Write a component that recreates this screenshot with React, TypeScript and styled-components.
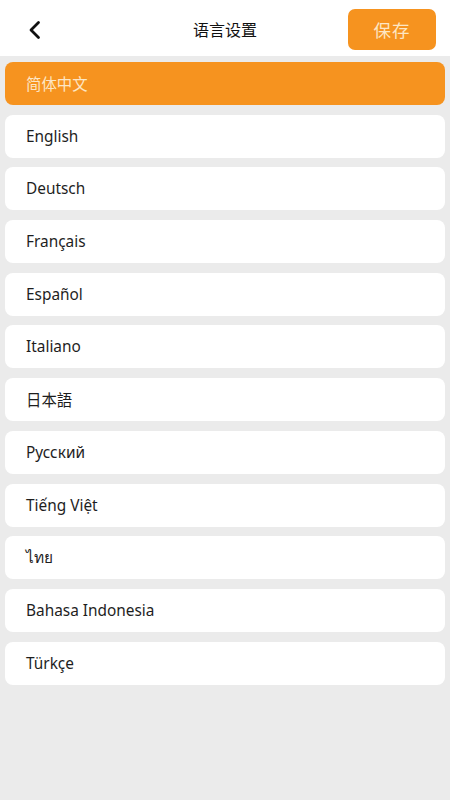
import { FC } from 'react';
import styled, { createGlobalStyle } from 'styled-components';

const LANGUAGES = [
  '简体中文',
  'English',
  'Deutsch',
  'Français',
  'Español',
  'Italiano',
  '日本語',
  'Русский',
  'Tiếng Việt',
  'ไทย',
  'Bahasa Indonesia',
  'Türkçe',
];

const GlobalStyle = createGlobalStyle`
  html, body {
    margin: 0;
    padding: 0;
    background: #ebebeb;
    font-family: "Noto Sans", "Noto Sans CJK SC", sans-serif;
  }
`;

const App: FC = () => {
  const selected = 0;

  return (
    <Root>
      <GlobalStyle />
      <Header>
        <BackButton aria-label="back">
          <svg width="16" height="20" viewBox="0 0 16 20" fill="none">
            <path d="M12.5 2.5 L5 10 L12.5 17.5" stroke="#111" strokeWidth="2.8" strokeLinecap="round" strokeLinejoin="round" />
          </svg>
        </BackButton>
        <Title>语言设置</Title>
        <SaveButton>保存</SaveButton>
      </Header>
      <List>
        {LANGUAGES.map((lang, i) => (
          <Row key={lang} $active={i === selected}>
            {lang}
          </Row>
        ))}
      </List>
    </Root>
  );
};

export default App;

const Root = styled.div`
  width: 450px;
  min-height: 800px;
  background: #ebebeb;
`;

const Header = styled.div`
  position: relative;
  height: 56px;
  display: flex;
  align-items: center;
  justify-content: space-between;
  padding: 0 14px 0 26px;
  background: #ffffff;
  box-sizing: border-box;
`;

const BackButton = styled.button`
  display: flex;
  align-items: center;
  justify-content: center;
  padding: 0;
  margin-top: 3px;
  border: none;
  background: transparent;
`;

const Title = styled.div`
  position: absolute;
  left: 0;
  right: 0;
  top: 19px;
  text-align: center;
  font-size: 16px;
  line-height: 22px;
  color: #111;
  pointer-events: none;
`;

const SaveButton = styled.button`
  width: 88px;
  height: 41px;
  margin-top: 3px;
  border: none;
  border-radius: 7px;
  background: #f6931f;
  color: #fde6c4;
  font-family: "Noto Sans CJK SC", sans-serif;
  font-size: 17.5px;
  letter-spacing: 1px;
`;

const List = styled.div`
  display: flex;
  flex-direction: column;
  gap: 9.7px;
  padding: 6px 5px 0;
`;

const Row = styled.div<{ $active: boolean }>`
  height: 43px;
  display: flex;
  align-items: center;
  padding-left: 21px;
  border-radius: 8px;
  font-size: 15.4px;
  color: ${({ $active }) => ($active ? '#fde6c4' : '#1e1e1e')};
  background: ${({ $active }) => ($active ? '#f6931f' : '#ffffff')};
`;
